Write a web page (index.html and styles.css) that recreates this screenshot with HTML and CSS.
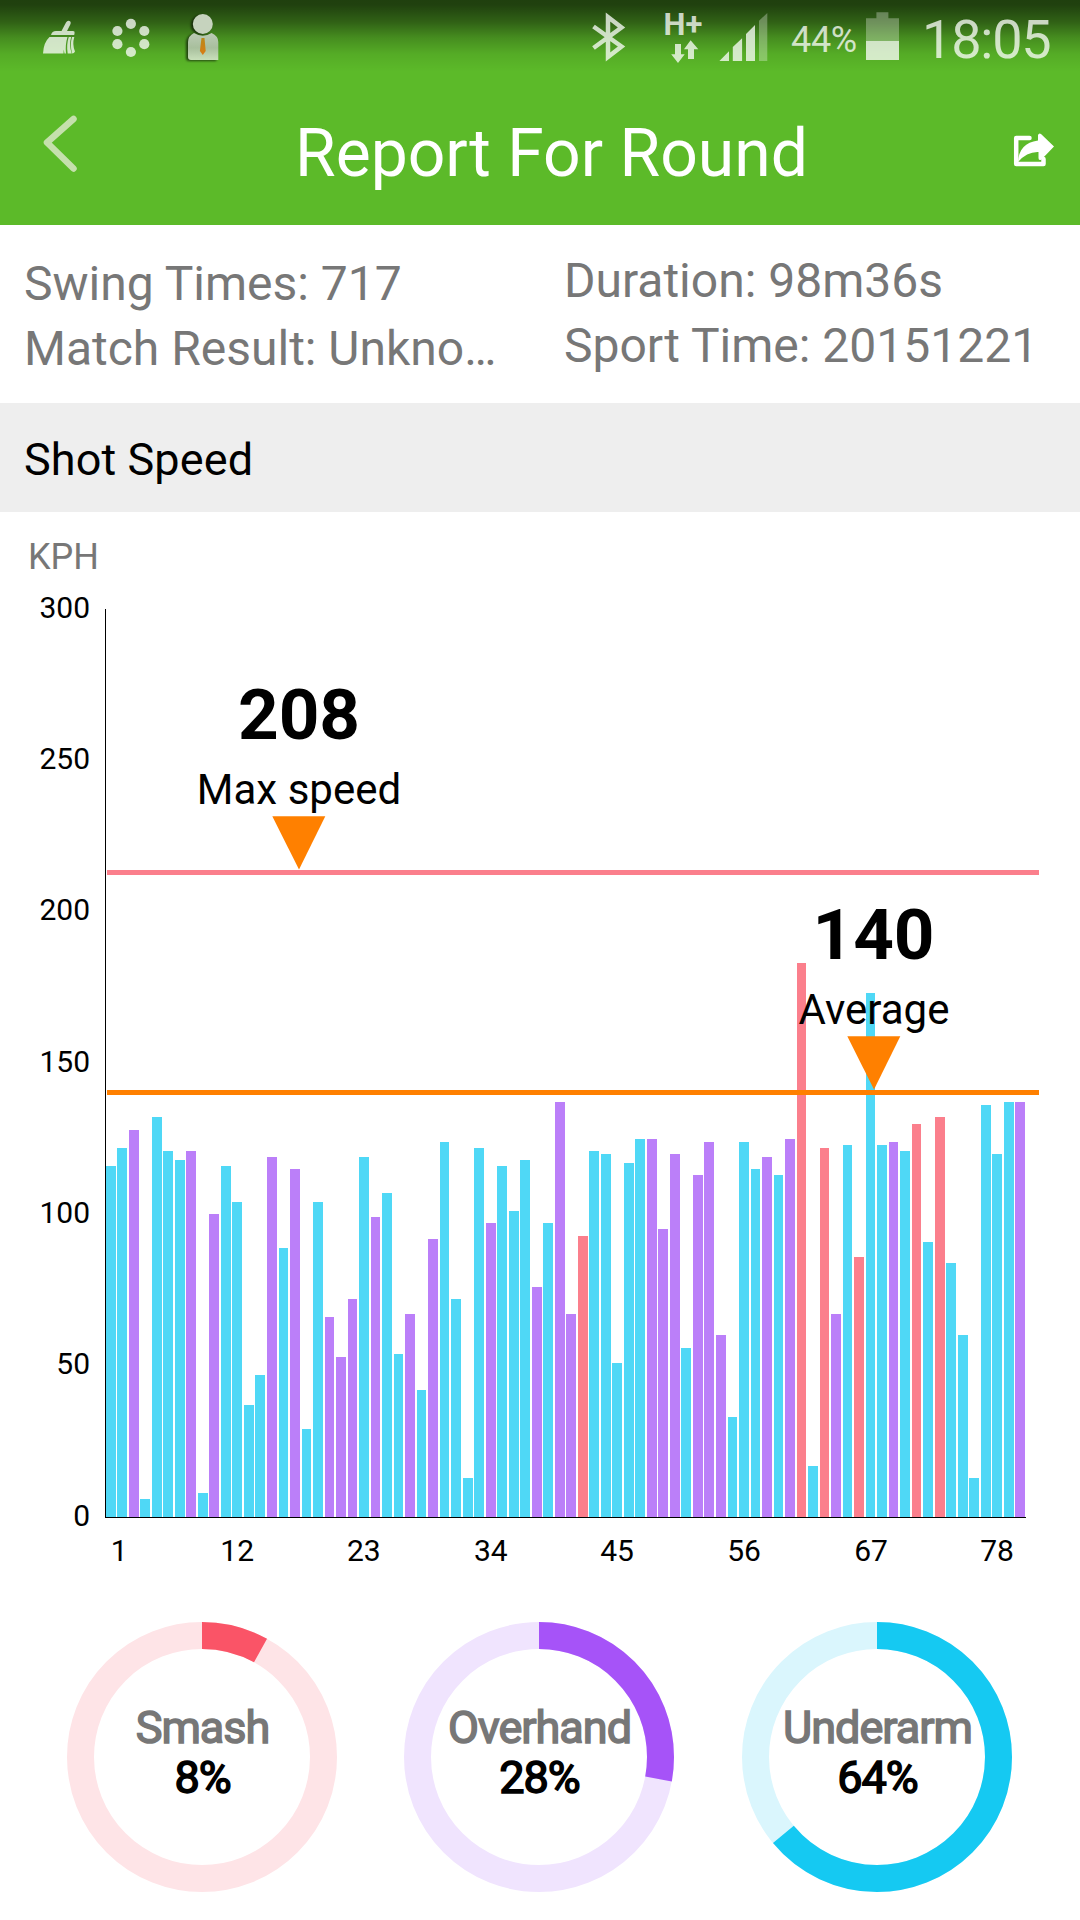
FILE: index.html
```html
<!DOCTYPE html>
<html lang="en">
<head>
<meta charset="utf-8">
<title>Report For Round</title>
<link rel="stylesheet" href="styles.css">
</head>
<body>
<header class="header">
  <div class="status">
    <svg class="status-left" width="230" height="75" viewBox="0 0 230 75">
      <defs>
        <linearGradient id="body" x1="0" y1="0" x2="0" y2="1"><stop offset="0" stop-color="#bccbb5"/><stop offset=".55" stop-color="#a8bf9d"/><stop offset="1" stop-color="#c8dfba"/></linearGradient>
        <linearGradient id="tie" x1="0" y1="0" x2="0" y2="1"><stop offset="0" stop-color="#b98a18"/><stop offset="1" stop-color="#d97c14"/></linearGradient>
      </defs>
      <g class="glyph">
        <path d="M66 22.500q1.500-2.500 3.500-1.500 2 1 .8 3.500L67 31h6q2 0 1.600 2l-.4 2H51q1-3.800 5-4h5.500z"/>
        <path d="M49.500 37H67.500q-2.500 8-1.500 16.500h-1.500l-.8-4-.2 4H43q.5-11 6.500-16.500z"/>
        <path d="M68.700 37h2.500q-2.500 8 .5 16.500h-4q-1.500-8.500 1-16.500zM72 37h2.300q-2.300 7.500.7 14.500-.7 1.800-2.800 2-2.600-8.500-.2-16.500z"/>
        <circle cx="130.900" cy="23.800" r="5.100"/><circle cx="117.400" cy="31" r="5.100"/><circle cx="144.300" cy="31" r="5.100"/>
        <circle cx="117.400" cy="44.200" r="5.100"/><circle cx="144.300" cy="44.200" r="5.100"/><circle cx="130.900" cy="52" r="5.100"/>
      </g>
      <g class="person">
        <path fill="url(#body)" d="M194 33q8.800 5.500 17.600 0 6.700 3 6.700 9V60H191q-3 0-3-3V42q0-6 6-9z"/>
        <circle cx="202.800" cy="24" r="10" fill="#c6d3be"/>
        <path fill="url(#tie)" d="M201.500 38h3l1.200 13-2.900 4-2.900-4z"/>
      </g>
    </svg>
    <svg class="status-icons" width="200" height="75" viewBox="590 0 200 75">
      <path class="bt" d="M593.500 26.500 621.500 46.500 608 57V17L621.500 27.500 593.500 48"/>
      <g class="glyph">
        <text class="hplus" x="663.500" y="34.500">H+</text>
        <path d="M675 44h6v10.300h3.700L678 63l-6.800-8.700h3.800zM688 59V49.300h-4l6.600-9 7.700 9H694V59z"/>
        <path d="M719.400 61 729 51.300V61zM732.800 61V47l9.300-8.700V61zM746 61V34l9-9V61z"/>
        <path opacity=".4" d="M759 61V20.700L767.300 13V61z"/>
      </g>
    </svg>
    <span class="battery-text">44%</span>
    <svg class="battery" width="33" height="48" viewBox="0 0 33 48">
      <path opacity=".3" fill="#fff" d="M0 6.300h10.400V.3h12v6H33V29H0z"/>
      <path class="glyph" d="M0 29h33v19H0z"/>
    </svg>
    <span class="clock">18:05</span>
  </div>
  <div class="bar">
    <svg class="back" width="40" height="64" viewBox="0 0 40 64"><path d="M33.500 8 7 31.500 33.500 57.500"/></svg>
    <h1>Report For Round</h1>
    <svg class="share" width="42" height="36" viewBox="0 0 42 36">
      <path fill="none" stroke="#fff" stroke-width="4.500" stroke-linejoin="round" stroke-linecap="round" d="M16.500 5H3.200V31H30.500V26"/>
      <path fill="#fff" d="M25 2q1-2.500 3-1L41 13.500 28.500 26.500q-3 1.500-3-1.500v-6Q14 18.500 5 29 6 10 25 7.500z"/>
    </svg>
  </div>
</header>

<section class="info">
  <div class="info-col info-left"><p>Swing Times: 717</p><p>Match Result: Unkno…</p></div>
  <div class="info-col info-right"><p>Duration: 98m36s</p><p>Sport Time: 20151221</p></div>
</section>

<h2 class="section-title">Shot Speed</h2>

<svg class="chart" width="1080" height="1090" viewBox="0 512 1080 1090">
  <text class="unit" x="28" y="569">KPH</text>
  <g class="y-labels">
    <text x="90" y="618">300</text><text x="90" y="769">250</text><text x="90" y="920">200</text>
    <text x="90" y="1072">150</text><text x="90" y="1223">100</text><text x="90" y="1374">50</text><text x="90" y="1526">0</text>
  </g>
  <g id="bars" class="bars"></g>
  <path class="axes" d="M105 609h1v908h920v1H105z"/>
  <path class="line-max" d="M107 870h932v5H107z"/>
  <path class="line-avg" d="M107 1090h932v5H107z"/>
  <g class="x-labels">
    <text x="119.200" y="1561">1</text><text x="237.200" y="1561">12</text><text x="363.800" y="1561">23</text><text x="490.800" y="1561">34</text>
    <text x="617" y="1561">45</text><text x="744" y="1561">56</text><text x="871" y="1561">67</text><text x="997" y="1561">78</text>
  </g>
  <g class="marker">
    <path d="M272.300 816.300h53L299 869.500z"/>
    <text class="marker-value" x="299" y="739">208</text>
    <text class="marker-name" x="299" y="804">Max speed</text>
  </g>
  <g class="marker">
    <path d="M847.300 1036.300h53L874 1089.500z"/>
    <text class="marker-value" x="873.500" y="959">140</text>
    <text class="marker-name" x="874" y="1024">Average</text>
  </g>
</svg>

<section class="donuts">
  <svg class="donut smash" width="270" height="270" viewBox="0 0 270 270">
    <circle class="track" cx="135" cy="135" r="121.500"/>
    <circle class="arc" cx="135" cy="135" r="121.500" pathLength="100" stroke-dasharray="8 100" transform="rotate(-90 135 135)"/>
    <text class="name" x="135.500" y="121">Smash</text><text class="pct" x="135.500" y="171">8%</text>
  </svg>
  <svg class="donut overhand" width="270" height="270" viewBox="0 0 270 270">
    <circle class="track" cx="135" cy="135" r="121.500"/>
    <circle class="arc" cx="135" cy="135" r="121.500" pathLength="100" stroke-dasharray="27.900 100" transform="rotate(-90 135 135)"/>
    <text class="name" x="135.500" y="121">Overhand</text><text class="pct" x="135.500" y="171">28%</text>
  </svg>
  <svg class="donut underarm" width="270" height="270" viewBox="0 0 270 270">
    <circle class="track" cx="135" cy="135" r="121.500"/>
    <circle class="arc" cx="135" cy="135" r="121.500" pathLength="100" stroke-dasharray="64 100" transform="rotate(-90 135 135)"/>
    <text class="name" x="135.500" y="121">Underarm</text><text class="pct" x="135.500" y="171">64%</text>
  </svg>
</section>
<script src="chart.js"></script>
</body>
</html>
```
FILE: styles.css
```css
* { box-sizing: border-box; }
body { margin: 0; width: 1080px; height: 1920px; overflow: hidden; background: #fff; font-family: Roboto, sans-serif; color: #000; }
h1, h2, p { margin: 0; font-weight: 400; }
svg { display: block; flex: none; }

.header {
  height: 225px;
  background: linear-gradient(rgba(0,0,0,.66) 0, rgba(0,0,0,.65) 5px, rgba(0,0,0,.48) 22px, rgba(0,0,0,.24) 38px, rgba(0,0,0,.08) 54px, rgba(0,0,0,0) 72px) #5cba29;
}
.status { display: flex; height: 75px; color: rgba(255,255,255,.75); }
.status-icons { margin-left: 360px; }
.glyph { fill: rgba(255,255,255,.75); }
.person { filter: drop-shadow(-1.5px 1.5px 1px rgba(0,0,0,.6)); }
.bt { fill: none; stroke: rgba(255,255,255,.75); stroke-width: 4.5; }
.hplus { font: 700 31px Roboto, sans-serif; }
.battery-text { width: 64px; margin: 19px 0 0 1px; font-size: 36px; line-height: 42px; letter-spacing: -.3px; white-space: nowrap; }
.battery { margin: 12px 0 0 11px; }
.clock { margin: 7px 0 0 23px; font-size: 54px; line-height: 65px; letter-spacing: -1.2px; white-space: nowrap; }

.bar { display: flex; height: 150px; }
.back { margin: 36px 0 0 40px; fill: none; stroke: #c5e0ac; stroke-width: 6.5; stroke-linecap: round; stroke-linejoin: round; }
.bar h1 { width: 600px; margin: 40px 0 0 215px; font-size: 66px; line-height: 78px; color: #fff; white-space: nowrap; }
.share { margin: 58px 0 0 118px; }

.info { display: grid; grid-template-columns: 540px 540px; height: 178px; padding-top: 23px; color: #777; font-size: 48px; line-height: 65px; white-space: nowrap; }
.info-col { padding-left: 24px; }
.info-left { padding-top: 3px; }

.section-title { height: 109px; padding: 1px 0 0 24px; background: #eee; font-size: 45px; line-height: 112px; letter-spacing: .1px; }

.unit { font-size: 36px; fill: #777; }
.y-labels { font-size: 30px; text-anchor: end; }
.x-labels { font-size: 30px; text-anchor: middle; }
.bars, .axes { shape-rendering: crispEdges; }
.b { fill: #4fd8f6; }
.p { fill: #bb7ff9; }
.r { fill: #fb7f8c; }
.line-max { fill: #fb7f8c; }
.line-avg, .marker path { fill: #ff8000; }
.marker { text-anchor: middle; }
.marker-value { font-size: 71px; font-weight: 700; }
.marker-name { font-size: 42px; }

.donuts { display: flex; gap: 67px; padding: 20px 0 0 67px; }
.donut { text-anchor: middle; font-size: 45px; letter-spacing: -1px; }
.donut.underarm { margin-left: 1px; }
.donut circle { fill: none; stroke-width: 27; }
.name { fill: #777; stroke: #777; stroke-width: 1.5; }
.pct { stroke: #000; stroke-width: 1.5; }
.smash .track { stroke: #fee4e7; }
.smash .arc { stroke: #fa5467; }
.overhand .track { stroke: #f0e4fe; }
.overhand .arc { stroke: #a653f8; }
.underarm .track { stroke: #daf6fd; }
.underarm .arc { stroke: #15c9f2; }
```
FILE: chart.js
```js
// Shot speeds in KPH; the letter is the stroke type: b underarm, p overhand, r smash.
const shots = ("116b 122b 128p 6b 132b 121b 118b 121p 8b 100p 116b 104b 37b 47b 119p 89b 115p 29b 104b 66p " +
  "53p 72p 119b 99p 107b 54b 67p 42b 92p 124b 72b 13b 122b 97p 116b 101b 118b 76p 97b 137p " +
  "67p 93r 121b 120b 51b 117b 125b 125p 95p 120p 56b 113p 124p 60p 33b 124b 115b 119p 113b 125p " +
  "183r 17b 122r 67p 123b 86r 173b 123b 124p 121b 130r 91b 132r 84b 60b 13b 136b 120b 137b 137p").split(" ");

const BASE = 1517;
const PX_PER_KPH = 908 / 300;

// Bar edges are snapped to whole pixels.
document.getElementById("bars").innerHTML = shots.map((shot, i) => {
  const left = Math.round(105.7978 + 11.5135 * i);
  const right = Math.round(115.644 + 11.512 * i);
  const height = Math.round(parseInt(shot, 10) * PX_PER_KPH);
  return `<rect class="${shot.slice(-1)}" x="${left}" y="${BASE - height}" width="${right - left}" height="${height}"/>`;
}).join("");
```
